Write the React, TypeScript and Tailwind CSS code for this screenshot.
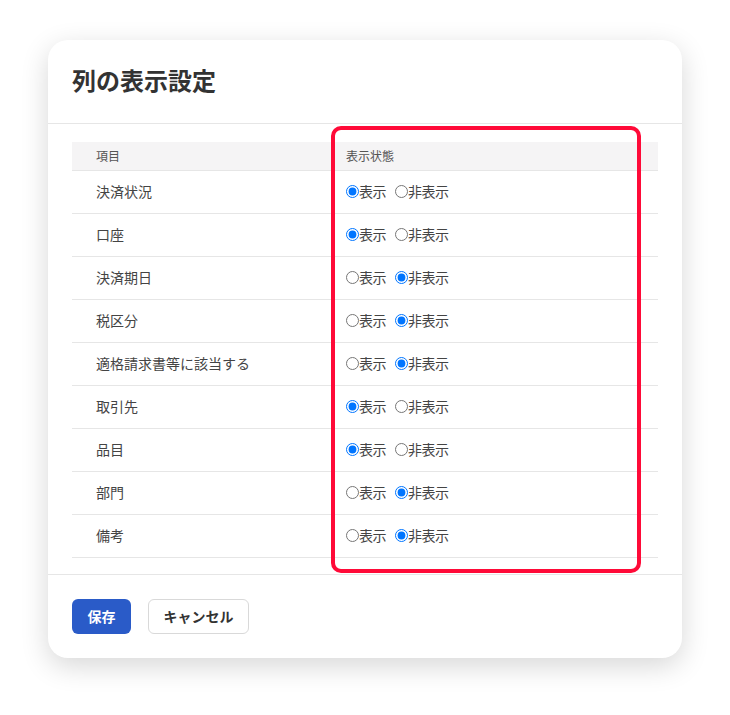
import { useState } from "react";

interface ColumnSetting {
  key: string;
  label: string;
  visible: boolean;
}

const initialColumns: ColumnSetting[] = [
  { key: "status", label: "決済状況", visible: true },
  { key: "account", label: "口座", visible: true },
  { key: "dueDate", label: "決済期日", visible: false },
  { key: "tax", label: "税区分", visible: false },
  { key: "invoice", label: "適格請求書等に該当する", visible: false },
  { key: "partner", label: "取引先", visible: true },
  { key: "item", label: "品目", visible: true },
  { key: "section", label: "部門", visible: false },
  { key: "memo", label: "備考", visible: false },
];

const App = () => {
  const [columns, setColumns] = useState<ColumnSetting[]>(initialColumns);

  const setVisible = (key: string, visible: boolean) => {
    setColumns((prev) => prev.map((c) => (c.key === key ? { ...c, visible } : c)));
  };

  return (
    <div
      className="min-h-screen bg-white pt-[40px] pl-[48px] text-[#333333]"
      style={{ fontFamily: '"Noto Sans CJK JP", "Noto Sans", sans-serif' }}
    >
      <div className="relative w-[634px] rounded-[20px] bg-white shadow-[0_8px_28px_rgba(0,0,0,0.16)]">
        <header className="flex h-[84px] items-center border-b border-[#e6e6e6] px-6 pb-[4px]">
          <h1 className="text-[24px] font-bold leading-none text-[#333333]">列の表示設定</h1>
        </header>

        <main className="px-6 pt-[18px] pb-[16px]">
          <table className="w-full border-collapse text-left">
            <thead>
              <tr className="h-[28px] border-b border-[#e6e6e6] bg-[#f5f4f5] text-[12px] text-[#555555]">
                <th className="w-[250px] pl-6 font-normal">項目</th>
                <th className="pl-6 font-normal">表示状態</th>
              </tr>
            </thead>
            <tbody>
              {columns.map((col) => (
                <tr key={col.key} className="h-[43px] border-b border-[#e6e6e6] text-[14px]">
                  <td className="pl-6 text-[#444444]">{col.label}</td>
                  <td className="pl-6">
                    <div className="flex items-center text-[#444444]">
                      <label className="mr-[9px] flex items-center tracking-[-0.5px]">
                        <input
                          type="radio"
                          name={col.key}
                          checked={col.visible}
                          onChange={() => setVisible(col.key, true)}
                          className="m-0 h-[13px] w-[13px]"
                        />
                        表示
                      </label>
                      <label className="flex items-center tracking-[-0.5px]">
                        <input
                          type="radio"
                          name={col.key}
                          checked={!col.visible}
                          onChange={() => setVisible(col.key, false)}
                          className="m-0 h-[13px] w-[13px]"
                        />
                        非表示
                      </label>
                    </div>
                  </td>
                </tr>
              ))}
            </tbody>
          </table>
        </main>

        <footer className="flex h-[84px] items-center gap-[17px] border-t border-[#e6e6e6] px-6">
          <button className="h-[35px] w-[59px] rounded-[6px] bg-[#2a5bc8] text-[14px] font-bold text-white">
            保存
          </button>
          <button className="h-[35px] w-[101px] rounded-[6px] border border-[#d9d9d9] bg-white text-[14px] font-bold text-[#333333]">
            キャンセル
          </button>
        </footer>

        {/* annotation highlight over the visibility column */}
        <div className="pointer-events-none absolute left-[283px] top-[86px] h-[447px] w-[310px] rounded-[10px] border-4 border-[#ff0a38]" />
      </div>
    </div>
  );
};

export default App;
